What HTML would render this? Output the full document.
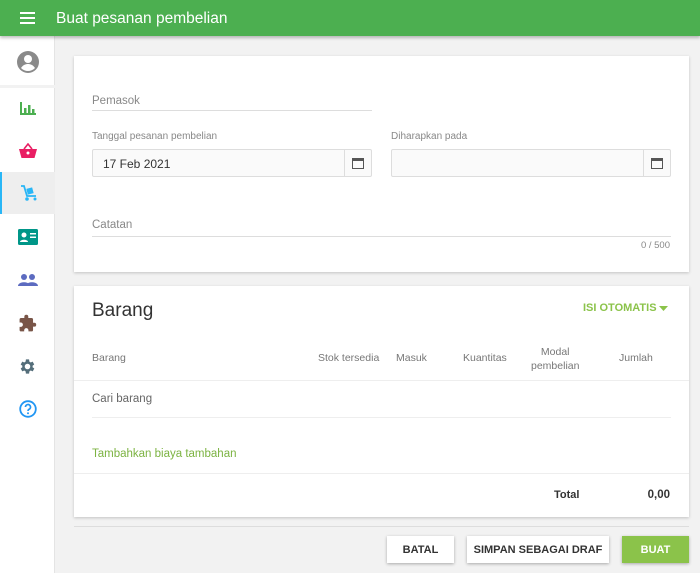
<!DOCTYPE html><html><head><meta charset="utf-8"><style>
*{box-sizing:border-box;margin:0;padding:0}
body{width:700px;height:573px;overflow:hidden;background:#f2f2f2;font-family:"Liberation Sans",Roboto,sans-serif;position:relative;color:#333}
.hdr{position:absolute;left:0;top:0;width:700px;height:36px;background:#4caf50;box-shadow:0 2px 3px rgba(0,0,0,.25);z-index:2}
.hdr .t{position:absolute;left:56px;top:10px;color:#fff;font-size:15.5px}
.side{position:absolute;left:0;top:36px;width:55px;height:537px;background:#fff;border-right:1px solid #e4e4e4}
.ic{position:absolute;left:0;width:55px;height:42px;display:flex;align-items:center;justify-content:center}
.card{position:absolute;left:74px;width:615px;background:#fff;box-shadow:0 1px 3px rgba(0,0,0,.2)}
.lbl{position:absolute;font-size:11px;color:#888}
.line{position:absolute;height:1px;background:#ddd}
.inp{position:absolute;height:28px;border:1px solid #ddd;border-radius:2px;background:#fafafa;font-size:12px;color:#333;padding:7px 10px}
.cal{position:absolute;right:0;top:0;width:27px;height:26px;border-left:1px solid #ddd;display:flex;align-items:center;justify-content:center}
.th{position:absolute;font-size:10.5px;color:#777;text-align:center}
.btn{position:absolute;top:536px;height:27px;background:#fff;box-shadow:0 1px 3px rgba(0,0,0,.3);font-size:11px;font-weight:bold;color:#333;display:flex;align-items:center;justify-content:center}
</style></head><body>
<div class="hdr"><svg style="position:absolute;left:20px;top:12px" width="15" height="12"><rect y="0" width="15" height="2" fill="#fff"/><rect y="5" width="15" height="2" fill="#fff"/><rect y="10" width="15" height="2" fill="#fff"/></svg><div class="t">Buat pesanan pembelian</div></div>
<div class="side">
<div class="ic" style="top:5px"><svg width="24" height="24" viewBox="0 0 24 24"><circle cx="12" cy="12" r="11" fill="#8a8a8a"/><circle cx="12" cy="9" r="4" fill="#fff"/><path d="M5 18c2-3 4.5-4 7-4s5 1 7 4c-2 2-4.5 3-7 3s-5-1-7-3z" fill="#fff"/></svg></div>
<div style="position:absolute;top:49px;left:0;width:55px;height:3px;background:#f2f2f2"></div>
<div class="ic" style="top:51px"><svg width="18" height="16"><rect x="1" y="2" width="2" height="13" fill="#4caf50"/><rect x="5" y="8" width="2.5" height="7" fill="#4caf50"/><rect x="9" y="5" width="2.5" height="10" fill="#4caf50"/><rect x="13" y="9" width="2.5" height="6" fill="#4caf50"/><rect x="1" y="13" width="16" height="2" fill="#4caf50"/></svg></div>
<div class="ic" style="top:94px"><svg width="18" height="16" viewBox="0 0 18 16"><path d="M5 6L9 1l4 5" stroke="#e91e63" stroke-width="1.6" fill="none"/><path d="M0 6h18l-2.5 9h-13z" fill="#e91e63"/><circle cx="9" cy="10" r="1.5" fill="#fff"/></svg></div>
<div class="ic" style="top:136px;background:#eee;border-left:2px solid #29b6f6"><svg width="18" height="18" viewBox="0 0 18 18"><path d="M1 2h3l3 10h9" stroke="#29b6f6" stroke-width="1.8" fill="none"/><rect x="7" y="4" width="6" height="6" fill="#29b6f6" transform="rotate(-15 10 7)"/><circle cx="7" cy="15" r="1.8" fill="#29b6f6"/><circle cx="15" cy="15" r="1.5" fill="#29b6f6"/></svg></div>
<div class="ic" style="top:180px"><svg width="20" height="16"><rect width="20" height="16" rx="1.5" fill="#009688"/><circle cx="6" cy="6" r="2.5" fill="#fff"/><path d="M2 13c0-3 8-3 8 0z" fill="#fff"/><rect x="12" y="4" width="6" height="1.5" fill="#fff"/><rect x="12" y="7.5" width="6" height="1.5" fill="#fff"/></svg></div>
<div class="ic" style="top:223px"><svg width="20" height="12"><circle cx="6" cy="3" r="3" fill="#5c6bc0"/><circle cx="14" cy="3" r="3" fill="#5c6bc0"/><path d="M0 12c0-5 12-5 12 0z M8 12c0-5 12-5 12 0z" fill="#5c6bc0"/></svg></div>
<div class="ic" style="top:266px"><svg width="19" height="19" viewBox="0 0 24 24"><path d="M20.5 11H19V7a2 2 0 0 0-2-2h-4V3.5a2.5 2.5 0 0 0-5 0V5H4a2 2 0 0 0-2 2v3.8h1.5a2.7 2.7 0 0 1 0 5.4H2V20a2 2 0 0 0 2 2h3.8v-1.5a2.7 2.7 0 0 1 5.4 0V22H17a2 2 0 0 0 2-2v-4h1.5a2.5 2.5 0 0 0 0-5z" fill="#795548"/></svg></div>
<div class="ic" style="top:309px"><svg width="19" height="19" viewBox="0 0 24 24"><path d="M19.4 13c.04-.3.06-.7.06-1s-.02-.7-.06-1l2.1-1.6-2-3.5-2.5 1a7 7 0 0 0-1.7-1L15 3h-4l-.4 2.9a7 7 0 0 0-1.7 1l-2.5-1-2 3.5L6.5 11c-.04.3-.06.7-.06 1s.02.7.06 1l-2.1 1.6 2 3.5 2.5-1c.5.4 1.1.7 1.7 1L11 21h4l.4-2.9c.6-.3 1.200-.6 1.7-1l2.5 1 2-3.5zM13 15.5a3.5 3.5 0 1 1 0-7 3.5 3.5 0 0 1 0 7z" fill="#546e7a" transform="translate(-1 0)"/></svg></div>
<div class="ic" style="top:352px"><svg width="18" height="18" viewBox="0 0 18 18"><circle cx="9" cy="9" r="7.8" stroke="#2196f3" stroke-width="1.8" fill="none"/><path d="M6.5 7a2.5 2.5 0 1 1 3.5 2.3c-.7.4-1 .8-1 1.7" stroke="#2196f3" stroke-width="1.7" fill="none"/><circle cx="9" cy="13.3" r="1" fill="#2196f3"/></svg></div>
</div>

<div class="card" style="top:56px;height:216px">
<div class="lbl" style="left:18px;top:39px;font-size:11.5px">Pemasok</div>
<div class="line" style="left:18px;top:54px;width:280px"></div>
<div class="lbl" style="left:18px;top:75px;font-size:10px">Tanggal pesanan pembelian</div>
<div class="inp" style="left:18px;top:93px;width:280px">17 Feb 2021<div class="cal"><svg width="12" height="12"><rect x=".5" y="1.5" width="11" height="10" stroke="#555" fill="none"/><rect x=".5" y="1.5" width="11" height="2.5" fill="#555"/></svg></div></div>
<div class="lbl" style="left:317px;top:75px;font-size:10px">Diharapkan pada</div>
<div class="inp" style="left:317px;top:93px;width:280px"><div class="cal"><svg width="12" height="12"><rect x=".5" y="1.5" width="11" height="10" stroke="#555" fill="none"/><rect x=".5" y="1.5" width="11" height="2.5" fill="#555"/></svg></div></div>
<div class="lbl" style="left:18px;top:163px;font-size:11.5px">Catatan</div>
<div class="line" style="left:18px;top:180px;width:579px"></div>
<div class="lbl" style="right:19px;top:184px;font-size:9.5px">0 / 500</div>
</div>

<div class="card" style="top:286px;height:231px">
<div style="position:absolute;left:18px;top:14px;font-size:19px;color:#333">Barang</div>
<div style="position:absolute;left:509px;top:16px;font-size:11px;font-weight:bold;color:#8bc34a">ISI OTOMATIS</div>
<svg style="position:absolute;left:585px;top:20px" width="9" height="5"><path d="M0 0h9L4.5 5z" fill="#8bc34a"/></svg>
<div class="th" style="left:18px;top:66px">Barang</div>
<div class="th" style="left:244px;top:66px">Stok tersedia</div>
<div class="th" style="left:322px;top:66px">Masuk</div>
<div class="th" style="left:389px;top:66px">Kuantitas</div>
<div class="th" style="left:457px;top:59px;line-height:14px">Modal<br>pembelian</div>
<div class="th" style="left:545px;top:66px">Jumlah</div>
<div class="line" style="left:0;top:94px;width:615px;background:#eee"></div>
<div class="lbl" style="left:18px;top:107px;font-size:11.5px;color:#666">Cari barang</div>
<div class="line" style="left:18px;top:131px;width:579px;background:#eee"></div>
<div style="position:absolute;left:18px;top:162px;font-size:11.5px;color:#7cb342">Tambahkan biaya tambahan</div>
<div class="line" style="left:0;top:187px;width:615px;background:#eee"></div>
<div style="position:absolute;left:480px;top:203px;font-size:11px;font-weight:bold">Total</div>
<div style="position:absolute;right:19px;top:203px;font-size:11.5px;font-weight:bold">0,00</div>
</div>
<div class="line" style="left:74px;top:526px;width:615px;background:#ddd"></div>
<div class="btn" style="left:387px;width:67px">BATAL</div>
<div class="btn" style="left:467px;width:142px">SIMPAN SEBAGAI DRAF</div>
<div class="btn" style="left:622px;width:67px;background:#8bc34a;color:#fff">BUAT</div>
</body></html>
